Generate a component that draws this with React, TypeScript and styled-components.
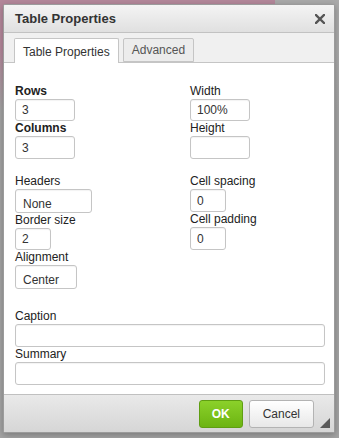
import React from 'react';
import styled, { createGlobalStyle } from 'styled-components';

const GlobalStyle = createGlobalStyle`
  html, body {
    margin: 0;
    padding: 0;
  }
  body {
    width: 339px;
    height: 438px;
    overflow: hidden;
    font-family: "Liberation Sans", Arial, sans-serif;
    background-color: #a3a3a3;
    background-image:
      linear-gradient(to bottom, rgba(163, 163, 163, 0) 0, rgba(163, 163, 163, 0) 50px, #a3a3a3 110px),
      linear-gradient(to right, #b3879a 0, #b3879a 275px, #a9a9a9 275px);
  }
`;

const Backdrop = styled.div`
  padding: 4px 4px 5px 3px;
`;

const Dialog = styled.div`
  width: 330px;
  height: 427px;
  border: 1px solid #9b9b9b;
  border-radius: 2px;
  background: #f0f0f0;
  display: flex;
  flex-direction: column;
  overflow: hidden;
  box-shadow: 0 2px 6px rgba(0, 0, 0, 0.25);
`;

const TitleBar = styled.div`
  height: 27px;
  display: flex;
  align-items: center;
  justify-content: space-between;
  padding: 0 8px 0 11px;
  background: linear-gradient(to bottom, #f4f4f4, #e0e0e0);
  border-bottom: 1px solid #c2c2c2;
`;

const Title = styled.span`
  font-size: 13px;
  font-weight: bold;
  color: #333;
`;

const CloseButton = styled.button`
  width: 12px;
  height: 12px;
  padding: 0;
  border: 0;
  background: none;
  display: flex;
  align-items: center;
  justify-content: center;
  cursor: pointer;
`;

const TabBar = styled.div`
  height: 29px;
  display: flex;
  align-items: flex-end;
  gap: 4px;
  padding: 0 10px;
  background: #f0f0f0;
  border-bottom: 1px solid #c5c5c5;
`;

const Tab = styled.div<{ $active?: boolean }>`
  height: ${({ $active }) => ($active ? '25px' : '24px')};
  box-sizing: border-box;
  padding: 0 8px;
  display: flex;
  align-items: center;
  font-size: 12px;
  color: ${({ $active }) => ($active ? '#333' : '#555')};
  background: ${({ $active }) => ($active ? '#fff' : '#ececec')};
  border: 1px solid #c5c5c5;
  border-bottom: ${({ $active }) => ($active ? '0' : '1px solid #c5c5c5')};
  border-radius: 2px 2px 0 0;
  margin-bottom: ${({ $active }) => ($active ? '-1px' : '0')};
  padding-top: ${({ $active }) => ($active ? '1px' : '0')};
`;

const Body = styled.div`
  flex: 1;
  background: #fff;
  padding: 21px 9px 0 11px;
  display: flex;
  flex-direction: column;
`;

const Columns = styled.div`
  display: grid;
  grid-template-columns: 175px 1fr;
`;

const Column = styled.div`
  display: flex;
  flex-direction: column;
`;

const Spacer = styled.div<{ $h: number }>`
  height: ${({ $h }) => $h}px;
`;

const Field = styled.label`
  display: flex;
  flex-direction: column;
  align-items: flex-start;
`;

const Label = styled.span<{ $bold?: boolean }>`
  font-size: 12px;
  line-height: 15px;
  color: #222;
  font-weight: ${({ $bold }) => ($bold ? 'bold' : 'normal')};
`;

const Input = styled.input<{ $w: number | string; $h?: number; $list?: boolean }>`
  box-sizing: border-box;
  width: ${({ $w }) => (typeof $w === 'number' ? `${$w}px` : $w)};
  height: ${({ $h }) => $h ?? 22}px;
  margin: 0;
  padding: ${({ $list }) => ($list ? '6px 6px 0 7px' : '0 6px')};
  border: 1px solid #c5c5c5;
  border-radius: 3px;
  box-shadow: inset 0 1px 1px rgba(0, 0, 0, 0.05);
  font-family: "Liberation Sans", Arial, sans-serif;
  font-size: 12px;
  color: #333;
  background: #fff;
  outline: none;
`;

const Footer = styled.div`
  height: 38px;
  box-sizing: border-box;
  border-top: 1px solid #c0c0c0;
  background: linear-gradient(to bottom, #e9e9e9, #d6d6d6);
  display: flex;
  align-items: center;
  justify-content: flex-end;
  gap: 6px;
  padding-right: 4px;
`;

const Button = styled.button<{ $primary?: boolean }>`
  height: 28px;
  box-sizing: border-box;
  padding: 0 ${({ $primary }) => ($primary ? '12px' : '13px')};
  font-family: "Liberation Sans", Arial, sans-serif;
  font-size: 12px;
  font-weight: ${({ $primary }) => ($primary ? 'bold' : 'normal')};
  color: ${({ $primary }) => ($primary ? '#fff' : '#333')};
  border: 1px solid ${({ $primary }) => ($primary ? '#5f9e12' : '#b3b3b3')};
  border-radius: 3px;
  background: ${({ $primary }) =>
    $primary
      ? 'linear-gradient(to bottom, #8bd12a, #6cb412)'
      : 'linear-gradient(to bottom, #ffffff, #e8e8e8)'};
  cursor: pointer;
`;

const Grip = styled.div`
  align-self: flex-end;
  width: 0;
  height: 0;
  margin: 0 0 4px 0;
  border-style: solid;
  border-width: 0 0 10px 10px;
  border-color: transparent transparent #5a5a5a transparent;
`;

const CloseIcon = () => (
  <svg width="10" height="10" viewBox="0 0 10 10">
    <path d="M1 1 L9 9 M9 1 L1 9" stroke="#555" strokeWidth="2.4" strokeLinecap="square" />
  </svg>
);

type FieldProps = {
  label: string;
  value?: string;
  width: number | string;
  height?: number;
  bold?: boolean;
  list?: boolean;
};

const FormField = ({ label, value = '', width, height, bold, list }: FieldProps) => (
  <Field>
    <Label $bold={bold}>{label}</Label>
    <Input $w={width} $h={height} $list={list} value={value} readOnly />
  </Field>
);

export default function App() {
  return (
    <>
      <GlobalStyle />
      <Backdrop>
        <Dialog>
          <TitleBar>
            <Title>Table Properties</Title>
            <CloseButton aria-label="Close">
              <CloseIcon />
            </CloseButton>
          </TitleBar>
          <TabBar>
            <Tab $active>Table Properties</Tab>
            <Tab>Advanced</Tab>
          </TabBar>
          <Body>
            <Columns>
              <Column>
                <FormField label="Rows" value="3" width={60} bold />
                <FormField label="Columns" value="3" width={60} height={23} bold />
                <Spacer $h={15} />
                <FormField label="Headers" value="None" width={77} height={24} list />
                <FormField label="Border size" value="2" width={36} />
                <FormField label="Alignment" value="Center" width={62} height={24} list />
              </Column>
              <Column>
                <FormField label="Width" value="100%" width={60} />
                <FormField label="Height" width={60} height={23} />
                <Spacer $h={15} />
                <FormField label="Cell spacing" value="0" width={36} height={23} />
                <FormField label="Cell padding" value="0" width={36} height={23} />
              </Column>
            </Columns>
            <Spacer $h={20} />
            <FormField label="Caption" width="100%" height={23} />
            <FormField label="Summary" width="100%" height={23} />
          </Body>
          <Footer>
            <Button $primary>OK</Button>
            <Button>Cancel</Button>
            <Grip />
          </Footer>
        </Dialog>
      </Backdrop>
    </>
  );
}
